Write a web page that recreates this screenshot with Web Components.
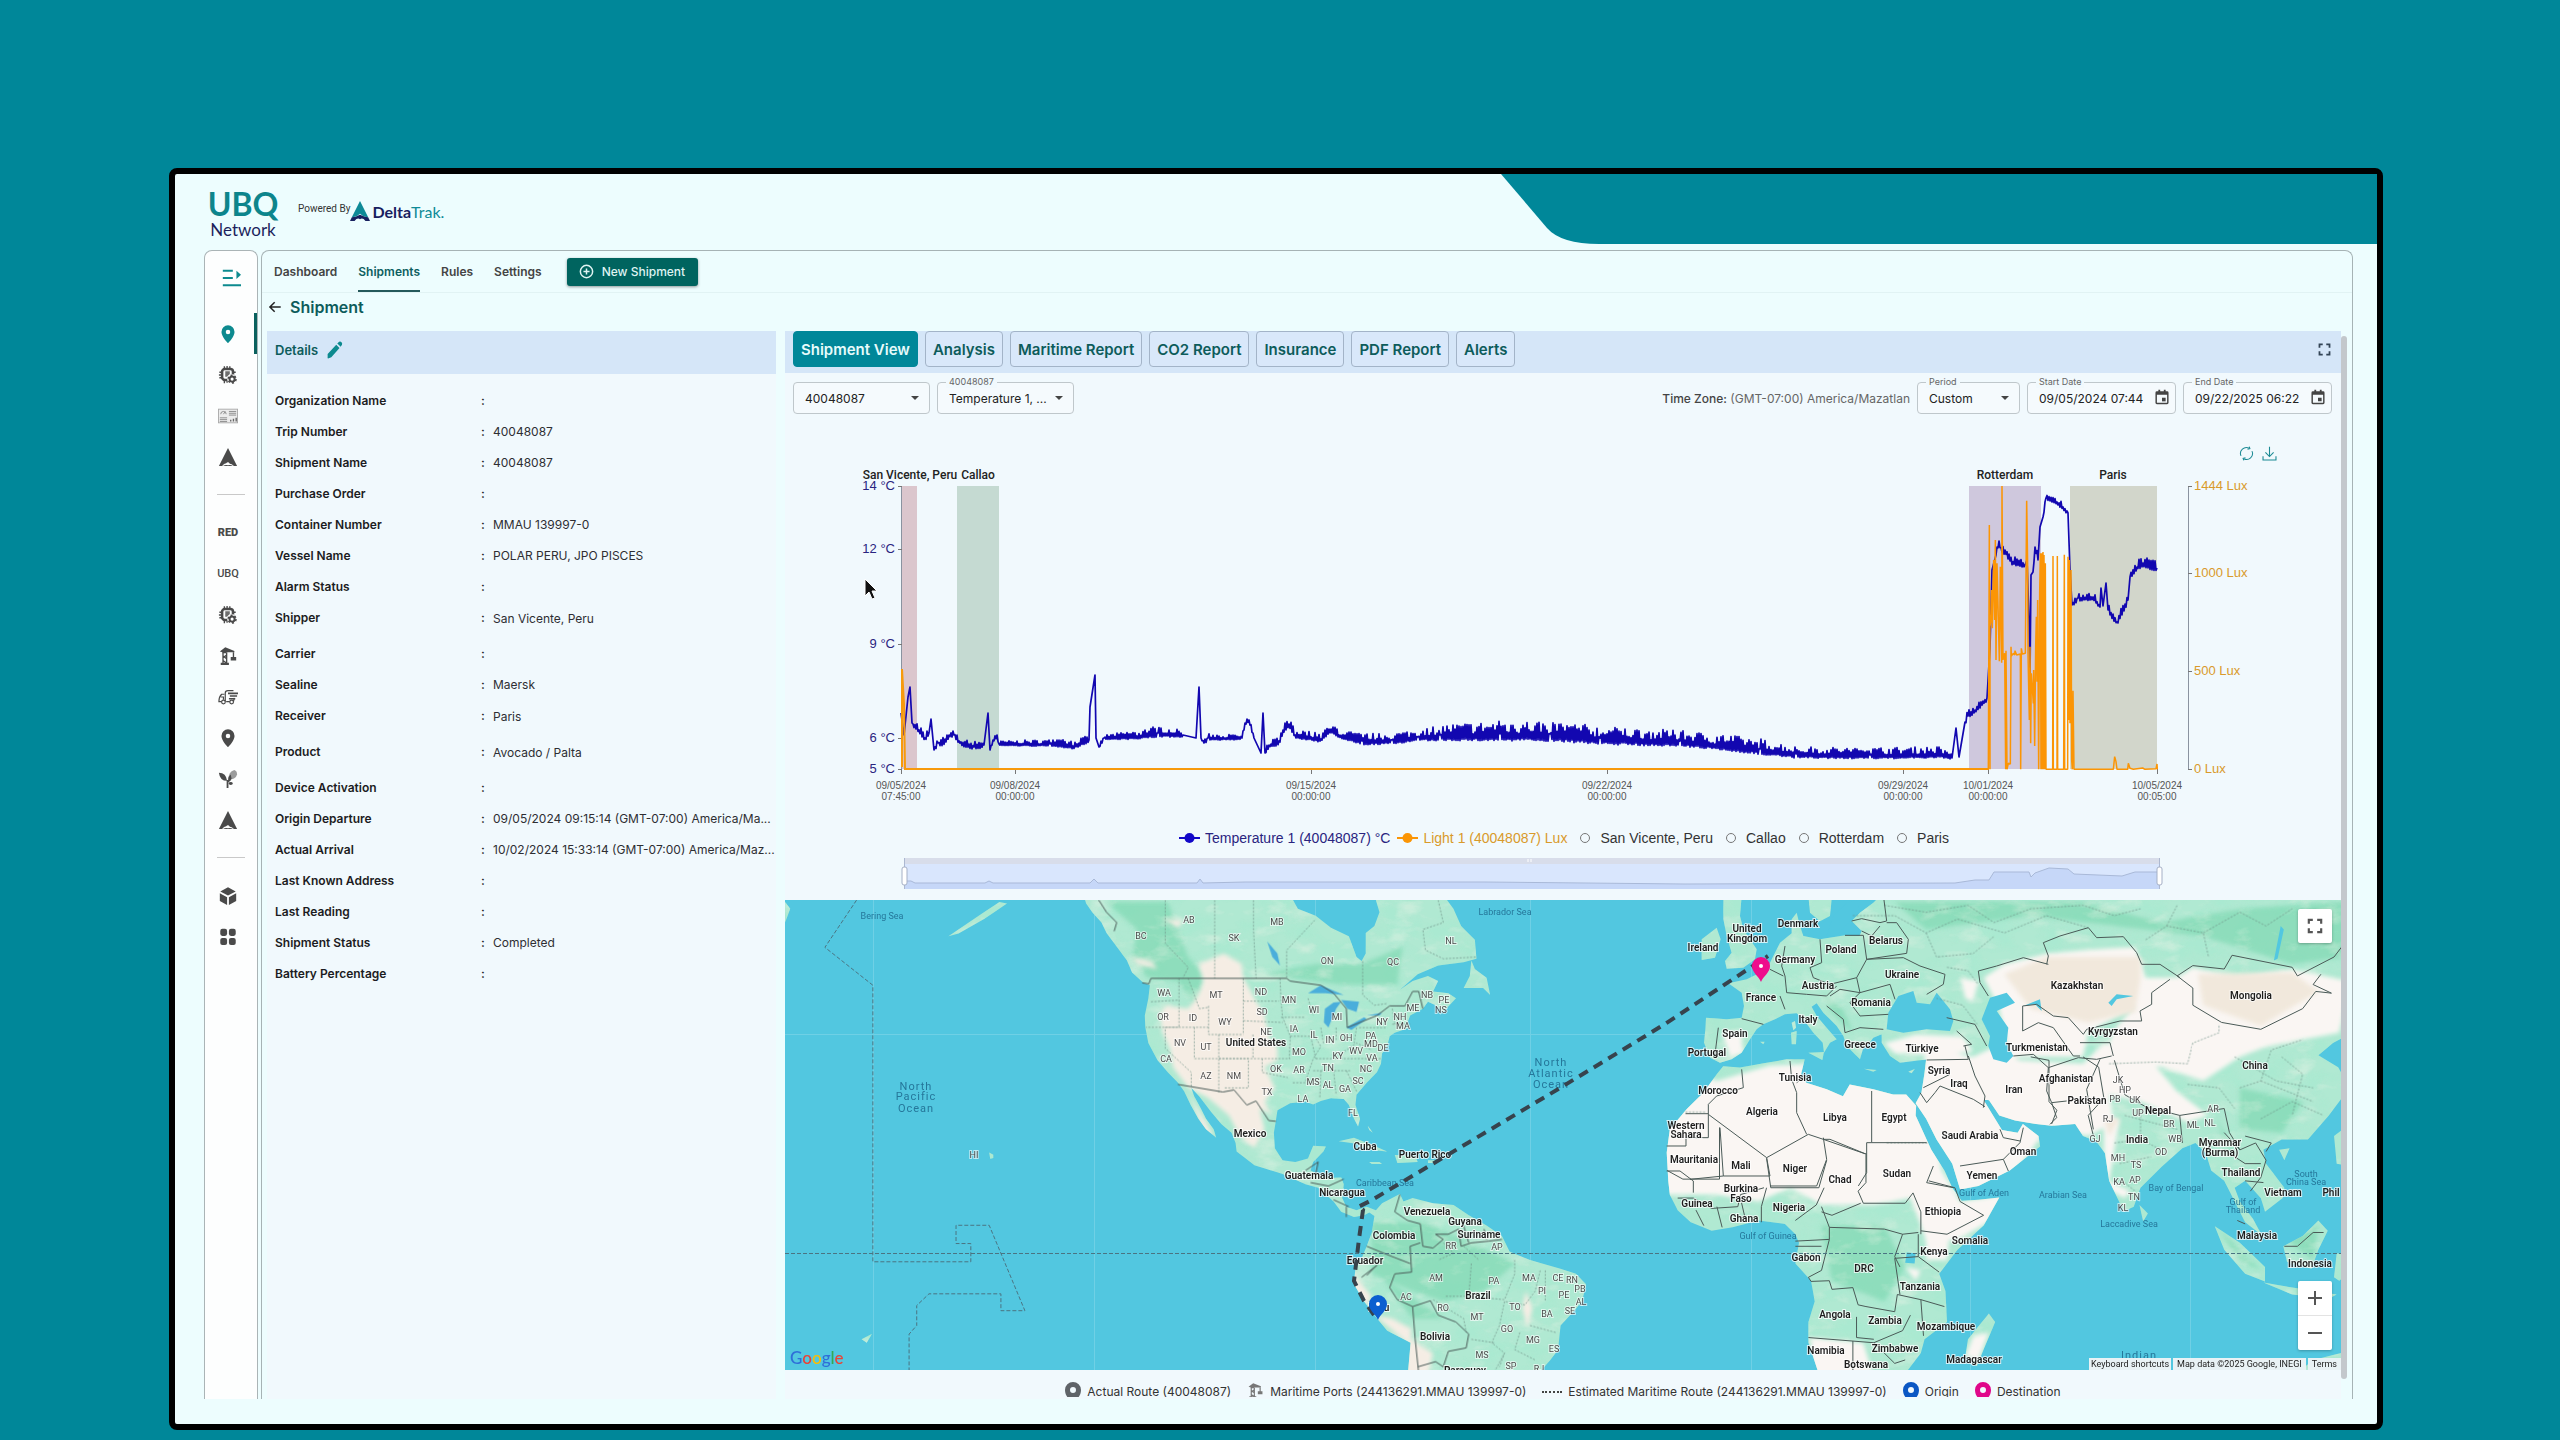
<!DOCTYPE html>
<html lang="en">
<head>
<meta charset="utf-8">
<title>UBQ Network - Shipment</title>
<style>
html,body{margin:0;height:100%}
body{background:#008799;font-family:Inter,"Liberation Sans",sans-serif;font-size:12px;color:#222}
</style>
</head>
<body>
<ubq-app></ubq-app>
<script>
const def=(name,html,setup)=>customElements.define(name,class extends HTMLElement{
  connectedCallback(){
    if(this.shadowRoot)return;
    const r=this.attachShadow({mode:'open'});
    const t=document.createElement('template');
    t.innerHTML=typeof html==='function'?html(this):html;
    r.append(t.content.cloneNode(true));
    if(setup)setup.call(this,r);
  }
});

/* ---------- icons ---------- */
const delta='<path d="M11 1 21 21H17.500Q15 18.500 13 18.500 11 15.500 9 18 6.500 18 4.500 21H1Z"/><path d="M5.500 21Q8 19 11 20 14 19 16.500 21Z"/>';
const ICONS={
 toggle:'<g fill="none" stroke="#0d8a8f" stroke-width="2"><path d="M2 3h11M2 11h11M2 19h20"/></g><path fill="#0d8a8f" d="M17 3v9l5-4.500z"/>',
 pin:'<path fill-rule="evenodd" d="M11 1.500a7.200 7.200 0 0 0-7.200 7.200C3.800 14 11 21 11 21s7.200-7 7.200-12.300A7.200 7.200 0 0 0 11 1.500Zm0 4.700a2.500 2.500 0 1 1 0 5 2.500 2.500 0 0 1 0-5Z"/>',
 chip:'<g fill="none" stroke="currentColor"><rect x="4.500" y="4.500" width="12" height="12" rx="3" stroke-width="2.800"/><path stroke-width="1.500" d="M7 4V1.500M10 4V1M13 4V1.500M7 17v3M10 17v2.500M4 8H1.500M4 11H1M4 14H1.500M17 8h2.500"/></g><path d="M8 7h5v3l-3 3H8z" opacity=".8"/><circle cx="15.500" cy="15.500" r="5.400" fill="#fff"/><circle cx="15.500" cy="15.500" r="2.800" fill="none" stroke="currentColor" stroke-width="2.200"/><circle cx="15.500" cy="15.500" r="4.300" fill="none" stroke="currentColor" stroke-width="1.700" stroke-dasharray="2.200 2.300"/>',
 board:'<rect x=".5" y="3.500" width="21" height="15" fill="#ececec" stroke="#a9a9a9"/><g stroke="#888" fill="none"><path d="M3 9a3 3 0 0 1 6 0M6 9l2-3M12 6h8M12 8h8M12 10h8M2 13h8M2 15h8M2 17h8"/><path stroke="#666" stroke-width="1.500" d="M14 17v-2M17 17v-3M20 17v-4"/></g>',
 delta,
 crane:'<path d="M2 6 8 1.500 18 5.500V7H9v1H5V7Z"/><path fill="none" stroke="currentColor" stroke-width="1.500" d="M5.500 7v13M9.500 7v13M5.500 11l4 3M5.500 16l4 3M9.500 10l-4 3M17 7v6"/><path d="M3 18.500h9v2.500H3zM14 12h6v4h-6z"/>',
 truck:'<g fill="none" stroke="currentColor" stroke-width="1.300"><path d="M8 16V6.500Q8 4 11 4h6M7 8H4Q1 11 1 16h3M9 16h4M17 16l1-4"/><path d="M11 7h11M13 10h8M12 13h7" stroke-width="1.700"/><circle cx="6" cy="16.500" r="2"/><circle cx="15" cy="16.500" r="2"/><path d="M3 11h3v3"/></g>',
 plant:'<path d="M1 4q8 0 9 9Q2 13 1 4Z"/><path d="M12 11q-1-8 6-10 3 1 3 5-2 6-9 5Z" opacity=".55"/><path d="M11 12q0-4 3-6l1 5z"/><path fill="none" stroke="currentColor" stroke-width="2" d="M10.500 12v9M11 14l3-3"/><ellipse cx="14" cy="16" rx="2.200" ry="1.600"/>',
 cube:'<path d="M11 1.500 19.500 6 11 10.500 2.500 6ZM2 8l8 4.300V21L2 16.500ZM20 8l-8 4.300V21l8-4.500Z"/>',
 grid:'<rect x="2.500" y="2" width="7.500" height="7.800" rx="2.300"/><rect x="12" y="2" width="7.500" height="7.800" rx="2.300"/><rect x="2.500" y="12" width="7.500" height="7.800" rx="2.300"/><rect x="12" y="12" width="7.500" height="7.800" rx="2.300"/>',
 back:'<path fill="none" stroke="#222" stroke-width="2.400" d="M20 11H3M10.500 3.500 3 11l7.500 7.500"/>',
 pencil:'<path d="M2 16 12.500 4.500l4 4L6.500 20 2.500 21.500Q1.500 21 2 20ZM13.800 3 16 1q1.500-.8 3 .5 1.300 1.500.5 3L18 7Z"/>',
 plus:'<g fill="none" stroke="currentColor" stroke-width="2.200"><circle cx="11" cy="11" r="9"/><path d="M11 6.500v9M6.500 11h9"/></g>',
 cal:'<path fill-rule="evenodd" d="M4 3h2V1h2.500v2h5V1H16v2h2q2 0 2 2v14q0 2-2 2H4q-2 0-2-2V5q0-2 2-2Zm0 5v11h14V8Z"/><path d="M11 12h5v5h-5z"/>',
 full:'<path fill="none" stroke="currentColor" stroke-width="3" d="M2.500 8V2.500H8M14 2.500h5.500V8M19.500 14v5.500H14M8 19.500H2.500V14"/>',
 refresh:'<g fill="none" stroke="currentColor" stroke-width="1.500"><path d="M3 14.500A8.600 8.600 0 0 1 15 3.400M19 7.500A8.600 8.600 0 0 1 7 18.600"/><path d="M12.500 4.800 16 4 15 .8M9.500 17.200 6 18l1 3.200"/></g>',
 down:'<path fill="none" stroke="currentColor" stroke-width="1.600" d="M11 1v14M5 9.500l6 6 6-6M1.500 15v5.500h19V15"/>'
};
def('ui-icon',h=>`<style>:host{display:inline-flex;width:var(--s,22px);height:var(--s,22px);flex:none}svg{width:100%;height:100%}</style>
<svg viewBox="0 0 22 22" fill="currentColor" aria-hidden="true">${ICONS[h.getAttribute('name')]}</svg>`);

/* ---------- header ---------- */
def('ubq-header',`<style>
:host{display:flex;height:76px;flex:none}
.logo{display:flex;flex-direction:column;align-items:center;width:70px;margin:13px 0 0 33px;font-family:Lato,sans-serif}
.logo b{font-size:32px;line-height:33px;font-weight:700;color:#0d858c}
.logo span{font-size:17px;line-height:20px;color:#1c1f5c}
.by{display:flex;align-items:center;height:24px;margin:22px 0 0 20px;font:10px Roboto,sans-serif;color:#333}
.by svg{width:20px;height:20px;margin-top:6px}
.dt{font:700 16px/20px Lato,sans-serif;color:#17205f;margin:8px 0 0 2px}
.dt span{font-weight:400;color:#0e8a97}
.wave{margin-left:auto;width:876px;height:70px}
</style>
<div class="logo"><b>UBQ</b><span>Network</span></div>
<div class="by"><span>Powered By</span><svg viewBox="0 0 22 22"><path fill="#0e8a97" d="M11 0 20 18 15 17 11 14 7 17 2 18Z"/><path fill="#17205f" d="M0 22 2 18Q7 18 9 16L11 15 13 16Q16 18 20 18L22 22H17Q14 18 11 20 8 18 5 22Z"/></svg><div class="dt">Delta<span>Trak.</span></div></div>
<svg class="wave" viewBox="0 0 876 70" preserveAspectRatio="none"><path fill="#008799" d="M0 0 46 54Q60 70 98 70H876V0Z"/></svg>`);

/* ---------- side rail ---------- */
def('side-rail',`<style>
:host{display:flex;flex-direction:column;align-items:stretch;box-sizing:border-box;width:54px;flex:none;background:#fdfefe;border:1px solid #aab4b6;border-bottom:0;border-radius:8px 8px 0 0;padding:6px 0 0;color:#4a4a4a}
button{all:unset;box-sizing:border-box;height:41px;display:flex;align-items:center;justify-content:center;padding-right:6px;font:700 12px Roboto,sans-serif;--s:20px}
button.top{margin-bottom:15px;padding:0}
button.on{color:#0d8a8f;box-shadow:inset -3px 0 #0a615e}
hr{border:0;height:1px;width:28px;background:#c9c9c9;margin:17px auto 17px 12px}
.u{font-size:11px;font-weight:500}.r{font-weight:900;font-size:11px}
</style><button class="top" aria-label="Expand"><ui-icon name="toggle"></ui-icon></button>
<button class="on" aria-label="Shipments"><ui-icon name="pin"></ui-icon></button>
<button aria-label="Devices"><ui-icon name="chip"></ui-icon></button>
<button aria-label="Dashboards"><ui-icon name="board"></ui-icon></button>
<button aria-label="DeltaTrak"><ui-icon name="delta"></ui-icon></button><hr>
<button class="r">RED</button><button class="u">UBQ</button>
<button aria-label="Chips"><ui-icon name="chip"></ui-icon></button>
<button aria-label="Ports"><ui-icon name="crane"></ui-icon></button>
<button aria-label="Carriers"><ui-icon name="truck"></ui-icon></button>
<button aria-label="Locations"><ui-icon name="pin"></ui-icon></button>
<button aria-label="Products"><ui-icon name="plant"></ui-icon></button>
<button aria-label="Delta"><ui-icon name="delta"></ui-icon></button><hr>
<button aria-label="Packages"><ui-icon name="cube"></ui-icon></button>
<button aria-label="Apps"><ui-icon name="grid"></ui-icon></button>`);

/* ---------- top navigation ---------- */
def('top-nav',`<style>
:host{display:block}
nav{display:flex;align-items:stretch;gap:21px;height:41px;padding-left:12px;border-bottom:1px solid #e1f3f4}
a{display:flex;align-items:center;font-weight:600;font-size:12px;color:#444;text-decoration:none;box-sizing:border-box;border:solid transparent;border-width:2px 0}
a.on{color:#0d5f61;border-bottom-color:#24595b}
button{align-self:center;display:flex;align-items:center;gap:8px;height:28px;margin-left:4px;padding:0 13px 0 12px;border:0;border-radius:3px;background:#00645f;color:#dff3f2;font:500 12px Inter,sans-serif;box-shadow:0 1px 3px #0006;--s:15px}
.title{display:flex;align-items:center;gap:8px;height:28px;padding-left:6px;--s:14px}
h1{margin:0;font-size:16px;font-weight:600;line-height:28px;color:#0d5c5b}
</style><nav><a href="#">Dashboard</a><a href="#" class="on">Shipments</a><a href="#">Rules</a><a href="#">Settings</a>
<button><ui-icon name="plus"></ui-icon>New Shipment</button></nav>
<div class="title"><ui-icon name="back"></ui-icon><h1>Shipment</h1></div>`);

/* ---------- details ---------- */
def('detail-row',`<style>
:host{display:grid;grid-template-columns:206px 12px 1fr;height:31px;line-height:31px;font-size:12px;color:#2e2e33}
:host([tall]){height:36px}
b{font-weight:600;color:#1c1c22}
:host([tall]) .v{line-height:34px}
.v{white-space:nowrap}
</style><b><slot name="label"></slot></b><b>:</b><span class="v"><slot></slot></span>`);
const rows=[['Organization Name',''],['Trip Number','40048087'],['Shipment Name','40048087'],['Purchase Order',''],['Container Number','MMAU 139997-0'],['Vessel Name','POLAR PERU, JPO PISCES'],['Alarm Status',''],['Shipper','San Vicente, Peru',1],['Carrier',''],['Sealine','Maersk'],['Receiver','Paris',1],['Product','Avocado / Palta',1],['Device Activation',''],['Origin Departure','09/05/2024 09:15:14 (GMT-07:00) America/Ma...'],['Actual Arrival','10/02/2024 15:33:14 (GMT-07:00) America/Maz...'],['Last Known Address',''],['Last Reading',''],['Shipment Status','Completed'],['Battery Percentage','']];
def('shipment-details',()=>`<style>
:host{display:block;width:509px;flex:none;background:#f1f9fd}
header{display:flex;align-items:center;gap:8px;height:43px;box-sizing:border-box;padding:0 8px 6px;background:#d5e6f8;font-weight:600;font-size:13px;color:#0d5c5b;--s:18px}
ui-icon{color:#0d8a8f}
.rows{padding:11px 4px 0 8px}
</style><header><span>Details</span><ui-icon name="pencil"></ui-icon></header>
<div class="rows">${rows.map(r=>`<detail-row${r[2]?' tall':''}><span slot="label">${r[0]}</span>${r[1]}</detail-row>`).join('')}</div>`);

/* ---------- outlined field ---------- */
def('out-field',h=>{const v=h.getAttribute('value'),l=h.getAttribute('label')||'',d=h.getAttribute('type')==='date';
return `<style>
:host{display:block;position:relative;height:32px;flex:none}
select,input{appearance:none;box-sizing:border-box;width:100%;height:32px;margin:0;padding:0 26px 0 11px;border:1px solid #bfc7cb;border-radius:4px;background:#f5fafd;font:12px Inter,sans-serif;color:#222}
label{position:absolute;left:9px;top:-6px;padding:0 3px;background:#f1f9fd;font-size:9px;line-height:12px;color:#666}
.t{position:absolute;right:11px;top:14px;border:4px solid transparent;border-top-color:#444;border-bottom:0}
ui-icon{position:absolute;right:6px;top:7px;--s:16px;color:#444}
</style>${l?`<label for="f">${l}</label>`:''}${d?`<input id="f" value="${v}"><ui-icon name="cal"></ui-icon>`:`<select id="f" aria-label="${l||'Device'}"><option>${v}</option></select><i class="t"></i>`}`});

/* ---------- report tabs and filters ---------- */
def('report-bar',`<style>
:host{display:block}
.tabs{display:flex;align-items:flex-start;gap:7px;height:42px;padding:0 8px;background:#d5e6f8}
.tabs button{height:36px;padding:0 7px;border:1px solid #a3b4c8;border-radius:4px;background:#d9e8fa;color:#0d5c5b;font:600 15px Inter,sans-serif}
.tabs button.on{background:#008799;border-color:#008799;color:#e6fbfb}
.tabs .fs{all:unset;margin:12px 2px 0 auto;color:#345;line-height:0;--s:13px}
.f{display:flex;align-items:center;gap:7px;padding:9px 9px 0 8px}
.tz{margin-left:auto;color:#666}.tz b{font-weight:500;color:#444}
.w1{width:137px}.w2{width:103px}.w3{width:149px}
</style><div class="tabs"><button class="on">Shipment View</button><button>Analysis</button><button>Maritime Report</button><button>CO2 Report</button><button>Insurance</button><button>PDF Report</button><button>Alerts</button><button class="fs" aria-label="Full screen"><ui-icon name="full"></ui-icon></button></div>
<div class="f"><out-field class="w1" value="40048087"></out-field><out-field class="w1" label="40048087" value="Temperature 1, ..."></out-field>
<span class="tz"><b>Time Zone:</b> (GMT-07:00) America/Mazatlan</span>
<out-field class="w2" label="Period" value="Custom"></out-field><out-field class="w3" type="date" label="Start Date" value="09/05/2024 07:44"></out-field><out-field class="w3" type="date" label="End Date" value="09/22/2025 06:22"></out-field></div>`);

/* ---------- chart ---------- */
// Key readings: x, y and jitter amplitude in chart units; the readings between them are filled in.
const temp=[[901,713,0],[904,735,0],[908,697,0],[910,687,0],[912,723,3],[919,730,4],[925,738,4],[929,733,3],[931,719,0],[934,750,2],[938,743,4],[946,742,4],[949,735,2],[954,735,3],[960,743,3],[974,747,4],[984,745,3],[988,713,0],[990,750,2],[993,740,3],[997,735,4],[999,744,2],[1050,744,3],[1073,746,4],[1089,740,3],[1090,707,0],[1095,675,0],[1096,738,0],[1099,747,2],[1104,738,2],[1137,736,4],[1158,733,5],[1183,735,3],[1196,738,0],[1199,687,0],[1201,738,2],[1204,743,2],[1208,738,3],[1242,738,2],[1245,723,3],[1249,720,2],[1254,738,2],[1261,753,0],[1263,713,0],[1265,753,2],[1269,745,3],[1280,742,4],[1283,730,4],[1289,724,4],[1295,735,4],[1321,739,4],[1331,729,4],[1339,735,4],[1362,741,5],[1392,740,5],[1418,737,5],[1440,735,7],[1500,734,9],[1550,734,9],[1600,738,8],[1680,741,7],[1715,744,7],[1760,749,7],[1796,754,5],[1870,755,5],[1943,754,5],[1952,758,2],[1956,728,0],[1959,757,0],[1965,722,3],[1968,716,4],[1975,710,4],[1987,698,4],[1990,647,0],[1992,570,0],[1996,555,3],[1999,541,3],[2002,552,6],[2005,550,4],[2010,561,4],[2025,565,4],[2027,560,0],[2029,620,0],[2030,675,0],[2031,575,0],[2033,572,5],[2035,547,3],[2038,560,4],[2040,527,0],[2043,517,2],[2046,498,2],[2057,502,3],[2063,507,4],[2068,513,2],[2070,570,0],[2072,605,2],[2078,598,4],[2093,597,4],[2100,607,2],[2101,588,0],[2103,606,2],[2106,583,0],[2108,610,4],[2117,622,4],[2128,600,4],[2130,577,4],[2137,567,4],[2143,563,5],[2157,568,5]];
let seed=7;const rnd=()=>(seed=(seed*16807)%2147483647)/2147483647;
let tp='';
for(let i=0;i<temp.length-1;i++){const [a,b,n]=temp[i],[c,d,m]=temp[i+1];tp+=`${a-785} ${b-374} `;
  if(n&&m)for(let x=a+1;x<c;x++){const k=(x-a)/(c-a),q=(n+(m-n)*k);const j=x%2?-rnd()*q*1.5:q*.5+rnd()*q*.3;tp+=`${x-785} ${(b+(d-b)*k+j-374).toFixed(1)} `}}
tp+='1372 194';
const light='-3 928 265 928 268 195 270 928 270 500 273 480 275 390 277 505 279 390 281 300 284 480 286 240 288 600 291 310 298 604 301 320 305 608 306 78 309 600 311 585 314 580 317 928 318 572 321 928 325 910 331 912 333 560 334 588 340 580 344 585 345 572 350 585 361 582 362 928 364 565 367 582 376 580 380 122 383 320 384 580 388 780 390 560 392 850 394 640 400 730 401 630 404 858 407 560 409 470 411 665 413 420 416 928 419 400 421 280 423 928 425 280 427 928 429 276 431 928 432 285 434 928 436 310 438 928 458 928 459 288 460 928 471 928 472 288 473 928 491 928 493 284 494 928 503 928 504 290 506 780 508 300 510 790 513 330 515 900 517 928 519 692 522 928 640 928 644 890 648 905 651 928 683 928 685 910 690 925 700 928 728 924 735 928 768 926 771 912 772 928';
const band=(x,w,c)=>`<rect x="${x-785}" y="112" width="${w}" height="283" fill="${c}"/>`;
const xt=[[901,'09/05/2024','07:45:00'],[1015,'09/08/2024','00:00:00'],[1311,'09/15/2024','00:00:00'],[1607,'09/22/2024','00:00:00'],[1903,'09/29/2024','00:00:00'],[1988,'10/01/2024','00:00:00'],[2157,'10/05/2024','00:05:00']];
def('trip-chart',()=>`<style>
:host{display:block}
svg{display:block;width:100%;height:auto}
text{font-family:"Liberation Sans",sans-serif}
.tools{position:absolute;right:64px;top:32px;display:flex;gap:8px;--s:15px;color:#1b8a94}
.wrap{position:relative}
.wrap button{all:unset;line-height:0}
.lg{display:flex;justify-content:center;align-items:center;height:24px;padding-left:9px;font:14px/24px "Liberation Sans",sans-serif;color:#333}
.lg span{display:flex;align-items:center;margin-right:7px}
.lg .k{width:21px;height:12px;margin-right:5px}
.lg .o{box-sizing:border-box;width:10px;height:10px;border:1px solid #777;border-radius:50%;margin:0 10px 0 6px}
</style><div class="wrap"><div class="tools"><button aria-label="Refresh"><ui-icon name="refresh"></ui-icon></button><button aria-label="Download"><ui-icon name="down"></ui-icon></button></div>
<svg viewBox="0 40 1556 412">
${band(902,15,'#dbc6cd')}${band(957,42,'#c5dad2')}${band(1969,72,'#cfc8dd')}${band(2070,87,'#d2d6cb')}
<g font-size="12" fill="#222" text-anchor="middle" style="font-weight:500">${[[910,'San Vicente, Peru'],[978,'Callao'],[2005,'Rotterdam'],[2113,'Paris']].map(a=>`<text x="${a[0]-785}" y="105" style="font-family:Roboto">${a[1]}</text>`).join('')}</g>
<path d="M116.500 112V395M1403.500 112V395" stroke="#8a93a0"/>
<g stroke="#777">${[[112],[175],[270],[364],[395]].map(a=>`<path d="M113 ${a[0]}.5h4"/>`).join('')}${[112,199,297,395].map(a=>`<path d="M1403 ${a}.5h4"/>`).join('')}${xt.map(a=>`<path d="M${a[0]-785}.5 395v5"/>`).join('')}</g>
<g font-size="13" fill="#2a2480" text-anchor="end">${[[112,14],[175,12],[270,9],[364,6],[395,5]].map(a=>`<text x="110" y="${a[0]+4}">${a[1]} °C</text>`).join('')}</g>
<g font-size="13" fill="#d99a2b">${[[112,1444],[199,1000],[297,500],[395,0]].map(a=>`<text x="1409" y="${a[0]+4}">${a[1]} Lux</text>`).join('')}</g>
<g font-size="10" fill="#555" text-anchor="middle">${xt.map(a=>`<text x="${a[0]-785}" y="415">${a[1]}</text><text x="${a[0]-785}" y="426">${a[2]}</text>`).join('')}</g>
<polyline points="${tp}" fill="none" stroke="#1207b0" stroke-width="1.700" stroke-linejoin="round"/>
<path d="M117 393V295L119 330 120 395H1204" fill="none" stroke="#f79a0c" stroke-width="2"/>
<g transform="translate(1115 86) scale(.333333)"><polyline points="${light}" fill="none" stroke="#fb9505" stroke-width="4.500" stroke-linejoin="bevel"/></g>
</svg></div>
<div class="lg">
<span style="color:#2a2480"><svg class="k" viewBox="0 0 21 12"><path stroke="#1207c8" stroke-width="2" d="M0 6h21"/><circle cx="10.500" cy="6" r="5" fill="#1207c8"/></svg>Temperature 1 (40048087) °C</span>
<span style="color:#d99a2b"><svg class="k" viewBox="0 0 21 12"><path stroke="#fb9505" stroke-width="2" d="M0 6h21"/><circle cx="10.500" cy="6" r="5" fill="#fb9505"/></svg>Light 1 (40048087) Lux</span>
<span><i class="o"></i>San Vicente, Peru</span><span><i class="o"></i>Callao</span><span><i class="o"></i>Rotterdam</span><span><i class="o"></i>Paris</span></div>
<svg viewBox="0 476 1556 50"><g>
<rect x="119" y="484" width="1255" height="31" fill="#d9e6fd"/><rect x="119" y="484" width="1255" height="6" fill="#d8ddea"/><path d="M743 485v3M746 485v3" stroke="#fff"/>
<path d="M119 515V507L126 507 130 509 200 509 204 507 208 509 305 509 309 505 313 509 412 509 415 505 418 509 460 508 700 508 900 510 1170 509 1190 506 1204 506 1209 498 1244 498 1246 503 1250 499 1264 494 1283 495 1289 500 1337 502 1350 498 1374 498V515Z" fill="#c6d7f8"/>
<path d="M119 507L126 507 130 509 200 509 204 507 208 509 305 509 309 505 313 509 412 509 415 505 418 509 460 508 700 508 900 510 1170 509 1190 506 1204 506 1209 498 1244 498 1246 503 1250 499 1264 494 1283 495 1289 500 1337 502 1350 498 1374 498" fill="none" stroke="#a9b9d8"/>
<path d="M119.500 484v31M1374.500 484v31" stroke="#acb8d1"/>
<rect x="117" y="493" width="5" height="18" rx="2" fill="#fff" stroke="#a5b0c6"/><rect x="1372" y="493" width="5" height="18" rx="2" fill="#fff" stroke="#a5b0c6"/>
</g></svg>`);

/* ---------- map ---------- */
// Two digitised sheets: W covers the Americas, E covers Europe, Africa and Asia, N is a finer northern sheet.
const W='translate(-5 -5) scale(.5102 .3444)',E='translate(775 -5) scale(.523 .3444)',N='translate(875 -4) scale(.33333)';
const landW='M595 0 600 25 612 50 630 80 640 110 660 150 680 190 690 225 712 255 725 262 722 300 715 350 716 385 722 430 740 480 760 515 780 545 792 570 805 610 820 650 835 680 855 705 850 680 835 650 825 620 812 585 806 560 822 585 845 630 865 665 885 690 893 720 895 745 930 785 985 810 1030 840 1055 850 1070 870 1085 890 1100 920 1125 935 1145 930 1155 922 1165 932 1160 980 1150 1020 1140 1055 1128 1080 1125 1130 1145 1180 1165 1220 1190 1265 1236 1300 1230 1400H1480L1510 1350 1525 1320 1530 1250 1555 1210 1572 1180 1580 1130 1560 1100 1530 1085 1470 1060 1430 1035 1415 990 1385 960 1350 930 1320 900 1280 895 1240 880 1222 890 1215 868 1180 895 1168 915 1150 905 1130 915 1110 905 1102 880 1105 840 1100 820 1070 822 1040 800 1045 775 1065 745 1070 730 1045 728 1035 765 1010 775 985 770 970 735 968 690 972 655 975 625 1000 605 1030 600 1045 608 1060 598 1080 590 1105 592 1115 610 1125 650 1133 672 1137 650 1128 610 1130 580 1150 545 1170 515 1178 490 1180 460 1190 440 1195 410 1205 400 1235 385 1230 370 1235 350 1260 330 1270 310 1285 320 1300 340 1325 300 1310 285 1280 280 1290 250 1270 235 1240 250 1215 275 1250 230 1290 205 1340 195 1365 185 1362 130 1335 90 1320 40 1300 0H1165L1175 50 1165 90 1148 110 1148 170 1140 192 1130 180 1115 120 1080 95 1050 60 1015 40 1000 0ZM1355 190 1362 215 1385 240 1392 290 1378 270 1340 270 1352 235ZM1095 715 1125 705 1160 725 1190 745 1155 740 1130 722ZM1205 755 1245 757 1250 775 1210 778ZM1270 770h15v8h-15ZM1155 775l20 0 5 6-20 0ZM410 748l8 6 0 10-6 2ZM330 120 380 70 430 20 445 25 400 70 350 112ZM160 1290 180 1275 170 1300ZM10 20 20 40 10 80ZM1152 670 1162 690 1155 682Z';
const europe='M575 75 600 50 640 20 660 0 1600 0 1600 700 900 600 800 490 760 495 720 500 690 480 665 440 665 415 640 425 625 445 610 455 600 490 580 470 560 450 550 420 530 390 490 350 470 322 455 332 470 360 500 395 530 430 510 440 492 470 488 440 460 410 430 370 410 352 375 355 345 370 310 385 290 400 270 430 245 470 215 490 180 500 150 485 132 440 136 400 138 365 200 370 245 365 252 330 245 290 205 262 260 250 300 230 330 200 340 180 360 140 395 112 395 70 410 50 420 90 430 120 480 130 555 118 598 120 605 105ZM445 0 450 50 480 76 510 60 516 0ZM190 0 245 0 240 60 250 100 290 160 285 190 250 215 200 218 195 195 215 170 200 120 190 70ZM125 130 170 95 182 130 165 185 125 192ZM395 380l10-5 3 20-8 8ZM393 410 410 405 408 445 395 445ZM445 470 492 468 487 492ZM612 518 650 522 640 527ZM745 527 765 518 755 532ZM300 437l14 0-4 8Z';
const africa='M468 477 433 477 395 487 344 501 312 497 300 520 274 574 242 622 210 680 204 748 207 830 210 870 225 915 250 950 290 975 330 965 380 945 430 955 450 985 457 1010 450 1070 480 1120 487 1180 475 1240 475 1300 497 1400 655 1400 690 1330 697 1290 740 1240 737 1150 725 1100 760 1030 810 960 840 878 800 885 768 888 750 850 735 800 710 740 695 690 680 640 681 612 662 579 637 579 599 564 554 550 541 584 510 564 471 545 460 526Z';
const asia='M700 477 697 516 691 574 680 605 700 650 720 710 750 780 765 855 800 845 860 800 918 730 915 700 885 665 875 690 845 682 810 595 820 595 840 640 870 655 910 665 940 670 985 665 1000 700 1025 715 1042 750 1050 830 1078 918 1097 905 1110 850 1150 790 1190 735 1215 720 1235 750 1245 800 1270 830 1290 890 1310 950 1342 988 1325 940 1300 890 1290 850 1310 830 1340 880 1348 920 1382 880 1385 850 1350 780 1345 740 1380 710 1430 710 1470 640 1510 560 1488 500 1450 465 1478 430 1515 400V0L760 0 760 450ZM820 1215 832 1240 810 1320 797 1368 775 1340 780 1290ZM1252 962 1300 1010 1348 1080 1348 1122 1310 1100 1270 1030ZM1345 1125 1400 1140 1485 1160 1470 1172 1400 1160ZM1383 1020 1420 990 1450 945 1468 975 1450 1030 1437 1085 1390 1065ZM1108 900 1124 925 1115 948ZM1375 740 1395 735 1385 770ZM1515 660 1480 700 1485 780 1515 790ZM1515 1045 1485 1040 1480 1110 1490 1120 1515 1090ZM1520 1320 1440 1350 1400 1400H1520Z';
const seas='<g transform="'+N+'"><path d="M680 400 685 350 715 300 760 285 770 320 810 325 830 290 870 340 880 375 870 405 800 400 730 410Z"/><path d="M990 305 1040 290 1065 320 1010 345 1045 395 1040 440 1060 480 1040 500 1000 490 985 450 990 420 965 370Z"/><path d="M1345 320 1370 295 1420 300 1370 310 1355 330ZM1090 330 1140 310 1145 345 1125 325Z"/><path d="M560 20 590 12 600 45 575 70 530 118 500 118 520 60Z"/></g><g transform="'+E+'"><path d="M663 1038 680 1040 678 1070 660 1068ZM1365 190 1378 90 1384 100 1372 185Z"/></g>';
const lakes='M1035 285 1060 262 1105 290 1070 285ZM1068 330 1085 312 1100 310 1090 330 1075 385 1066 370ZM1100 305 1135 310 1130 340 1112 330ZM1110 385 1145 355 1150 360 1120 392ZM1150 350 1180 342 1175 350ZM955 135 975 170 980 205 965 180Z';
const pale={
W:'M820 200 870 170 905 200 908 240 930 300 950 350 960 420 975 440 975 480 950 500 970 560 950 600 965 640 940 620 950 680 930 735 900 700 880 640 840 590 800 560 770 500 765 450 750 400 745 350 755 320 800 330 820 290 830 250ZM1165 1220 1200 1230 1238 1260 1236 1290 1280 1330 1270 1400 1225 1400 1230 1300ZM1120 1080 1135 1120 1160 1165 1150 1195 1120 1140ZM750 70 790 75 780 95ZM1462 1150 1475 1200 1465 1260 1455 1200ZM800 570 850 700 830 690ZM690 180 730 195 740 215 700 200Z',
E:'M200 480 300 540 400 495 480 490 700 560 730 800 765 890 850 870 820 950 760 1000 700 1010 695 980 670 880 600 900 500 900 440 850 380 890 300 870 195 870ZM690 540 700 440 790 470 830 440 880 480 1000 490 1040 430 1130 480 1180 570 1240 640 1200 660 1110 600 1050 580 1060 660 1010 700 940 680 920 700 860 830 760 870 680 600ZM620 430 680 405 770 410 790 455 720 465 640 460ZM810 240 850 200 930 170 1000 160 1100 150 1120 240 1180 240 1210 210 1290 240 1400 215 1510 250 1490 400 1420 420 1350 440 1300 470 1230 540 1150 500 1040 470 1060 390 1100 320 1010 400 1000 470 860 470 840 330ZM700 970 745 980 740 1060 700 1060ZM480 1285 580 1300 600 1400 480 1400ZM820 1270 800 1350 775 1340 790 1280ZM660 1080 690 1090 680 1120ZM1040 650 1070 650 1060 740 1050 830 1090 860 1080 880 1040 850ZM310 400 345 395 350 460 325 470ZM765 240 800 250 790 310 775 300Z'};
const dark={W:'M690 180 700 100 640 20 760 20 800 180 830 230 820 330 780 250 720 240ZM950 230 1050 200 1140 200 1220 150 1210 260 1100 260ZM1160 950 1260 950 1340 1000 1440 1070 1380 1150 1300 1180 1240 1150 1160 1100ZM1180 1110 1300 1230 1240 1230Z',E:'M640 20 1000 20 1150 80 1300 40 1500 20 1500 180 1400 200 1230 120 900 60 700 100ZM500 960 620 960 660 1080 620 1180 520 1120ZM1300 560 1420 600 1380 690 1300 680ZM1255 640 1290 760 1270 720ZM500 280 540 330 560 400 520 340ZM1390 1000 1450 960 1440 1060ZM1260 970 1340 1090 1300 1060ZM700 880 740 900 720 950Z'};
const bordW='M625 15 640 50 660 80 655 105M710 255 723 258 727 242H993L1000 250 1060 262 1085 285 1110 330 1112 385 1170 350 1195 322 1225 322 1240 280 1252 280 1260 330M780 550 868 572 890 566 915 610 933 598 958 655 972 657M1030 800 1055 775 1050 810M1040 835 1075 845 1105 825M1085 885 1115 905M1110 905v30M1215 870 1205 920 1230 945 1255 955 1260 1020 1280 1025 1300 1000 1285 985 1310 985 1330 970M1330 970 1335 1020 1355 1010 1390 1005 1415 1000M1340 960 1350 1010M1380 970 1385 1000M1255 1010 1235 1020 1238 1095 1205 1100 1195 1140 1210 1175 1240 1195 1275 1178 1290 1220 1325 1240 1350 1275 1345 1315 1310 1325 1300 1370 1285 1355 1250 1370M1240 1195 1245 1290 1252 1390M1150 1020 1200 1050 1235 1070M1150 1105 1170 1075 1140 1110';
const stateW='M755 15V140L800 210 790 240M852 15V242M928 15V100L933 242M993 240V160L1050 70M1142 192V290L1165 320 1190 315M1290 15 1300 80 1260 100 1265 160 1300 185 1365 180M727 310 782 305V384H717M782 242V305M800 242 822 330 840 326M840 322V405H908M840 384H755V445L806 515V560M812 384V475H1000M860 405V575M908 242V405M860 475H918V560H870M927 405V475M945 475V515L995 530M908 308H978M908 365 985 370M980 242 982 310 985 355 1000 410 998 475M982 355H1030M1000 410H1040L1050 475M1035 300 1045 350M1040 390 1060 440 1045 475 1030 540M1060 385 1065 430M1090 385V420M1130 385 1125 430M1135 385H1190M1050 475H1180M1045 510H1120M1060 510 1058 590M1085 510 1090 580M1110 510 1130 570M1005 545H1030M1100 460 1130 430 1160 450M1200 375H1235M1200 330 1205 375M1300 1010 1320 1040 1290 1060M1340 1020 1370 1060M1355 1070 1350 1165 1420 1175 1440 1100 1440 1060M1305 1165H1350M1280 1175 1340 1230 1345 1270M1490 1090 1480 1150 1460 1190 1420 1180M1500 1090V1180M1420 1180 1410 1250 1395 1300 1420 1330 1410 1370M1470 1250 1520 1270M1450 1270 1440 1320 1480 1350M1355 1290 1400 1300M1400 1385 1420 1330';
const bordN='M575 75 605 68 660 80 680 75 672 12M605 105 635 120 660 90M480 130 485 200 450 215 460 245 510 265 590 245 620 190 740 172 745 130 710 80 680 80M555 118 610 118 620 190M375 150 365 210 375 240 380 290M370 240 330 220M360 300 375 340M380 290 440 295 500 300 530 270M245 368 310 385M175 395 165 475M590 245 600 290 690 265 705 310M620 190 730 185 780 210 855 235 850 265 800 295M600 290 570 320 600 360 685 355M500 330 550 370 555 410 600 395 670 400M510 300 540 280 600 290M1160 205 1165 180 1150 140 1200 120 1285 95 1310 125 1390 122 1430 170 1445 205 1500 205 1560 245M1165 205 1090 185 1010 210 955 225 960 260 985 300M1530 250 1475 290 1475 325 1440 345 1445 375 1380 375 1280 400 1270 415 1225 365 1180 360 1130 325 1088 330V405M1088 405 1135 380 1180 395 1240 480 1260 480M1060 480 1120 475 1165 515 1255 485 1310 490 1355 480M1165 515 1160 585 1175 620 1220 615M1175 620 1190 665 1170 685M1280 580 1320 490M1260 440 1350 440 1360 480M860 365 945 385 980 450M890 405 935 445 910 450M915 450 925 490 800 492M925 480 945 540 975 600 970 635M870 535 790 575M780 590 800 620 825 590 840 570 940 610 975 632M245 520 250 575 170 600 145 625V655L320 785 445 715 490 730 620 775V740H635V585M410 560 435 540M390 495 395 550 410 590 410 650 440 715M490 730H510L620 775M635 740H800M1090 695 1080 740 1030 790 900 810M1030 790 1045 825M1020 700 1030 725 1080 735M320 785 330 840 190 840 180 695M190 840 90 850M20 750H78V725H145V655M20 825 60 825 100 855 100 890M490 725 500 790 470 870 330 870M620 775V830L595 870M820 810 800 860 880 875M1280 580 1290 640 1300 700';
const bordE='M205 800 235 825H305V675M283 635H240M395 765 403 850 495 850 510 770M585 755V835L570 860 580 895 660 895 675 865M705 830 755 850 765 890 810 930M690 975 740 985 810 930M675 865 690 920 690 985M395 850 385 905V950M345 880 355 945M300 905 310 965M260 915 275 960M225 880 255 880 290 910 340 905 345 870 390 850M505 850 490 900 450 945M500 905 515 965 515 1000 450 1005M515 1000 500 1090 475 1110 480 1122 515 1120 520 1145 560 1140 570 1190 585 1195 640 1210 645 1160 690 1175 735 1195M515 965 620 970 655 985 685 980M655 985 640 1050 650 1080M685 1050 725 1095M685 985 685 1050 640 1055 650 1160M450 1020H500M575 895 520 930 500 920M567 1225V1285L600 1290M475 1285 600 1300 655 1265 670 1220M560 1295V1380M600 1300 640 1360 660 1350M690 1175 695 1280M900 470 935 480 935 600 950 625 940 665M1180 235 1210 205 1270 215 1285 175 1400 210 1410 235 1480 180 1495 150M1180 235 1210 270 1210 320 1265 370 1340 390 1420 330 1445 280 1475 285 1440 260 1455 230M1060 480 1080 580 1120 615 1185 640 1270 620 1280 690 1300 740M1000 470 1030 500 1040 590 1010 640 1020 700M1185 640 1190 720M1270 690 1300 740 1330 720 1350 770 1340 820 1320 860M1310 700 1360 720 1350 745M1270 740 1310 780 1340 780M1310 830 1345 835M1385 1020 1410 1020 1440 980 1460 980M1295 945 1310 955';
const stateE='M1050 490 1140 485 1200 490 1210 430 1260 400 1260 375M1200 550 1260 560 1290 620M1300 560 1340 540 1360 450 1420 420M1290 470 1370 540 1440 560M1340 650 1400 600 1460 640M1080 640 1130 660 1180 680M1060 720 1110 710 1150 740M1070 780 1130 760M1075 830 1100 860M1110 620 1110 700M560 60 640 60 700 110 760 70 850 110 930 60 1010 95M700 110 720 180 790 170 830 120M620 30 700 50 780 30 830 80 900 40 1000 30 1060 60 1110 40M1120 130 1160 90 1230 110 1240 180M1160 90 1180 30M1230 110 1300 50 1350 90 1400 40M740 210 780 220 800 260M720 300 770 320 800 380M240 630h40M625 720h80M1380 470 1420 520 1400 640M1340 540 1440 600';
const T=(list,fn)=>list.trim().split(';').map(s=>{const [t,x,y]=s.trim().split('|');const p=fn(+x,+y);return `<text x="${Math.round(p[0])}" y="${Math.round(p[1])}">${t}</text>`}).join('');
const fW=(x,y)=>[-5+x*.5102,-1+y*.3444],fE=(x,y)=>[775+x*.523,-1+y*.3444];
const cW='United States|932|428;Mexico|922|692;Cuba|1147|729;Puerto Rico|1265|752;Guatemala|1037|813;Nicaragua|1102|863;Venezuela|1268|918;Guyana|1343|948;Suriname|1370|983;Colombia|1203|986;Ecuador|1147|1060;Brazil|1369|1162;Peru|1174|1196;Bolivia|1283|1281;Paraguay|1343|1378';
const cE='Denmark|456|81;United|357|95;Kingdom|357|125;Ireland|273|151;Poland|537|157;Belarus|624|131;Germany|450|187;Ukraine|654|229;Austria|494|262;France|385|295;Romania|594|311;Italy|475|361;Spain|334|401;Portugal|282|457;Greece|573|433;Türkiye|693|443;Kazakhstan|989|261;Mongolia|1321|290;Kyrgyzstan|1057|396;Turkmenistan|912|441;China|1328|494;Syria|724|507;Iraq|763|546;Iran|868|562;Afghanistan|968|532;Pakistan|1008|596;Nepal|1144|625;Tunisia|450|528;Morocco|303|565;Algeria|387|627;Libya|525|644;Egypt|638|644;Saudi Arabia|784|697;Oman|885|744;Yemen|806|814;India|1103|708;Myanmar|1261|718;(Burma)|1261|746;Thailand|1302|805;Vietnam|1382|862;Phil|1475|862;Malaysia|1332|987;Indonesia|1434|1069;Western|240|667;Sahara|240|695;Mauritania|257|768;Mali|346|785;Niger|449|792;Chad|536|826;Sudan|645|808;Burkina|346|851;Faso|346|881;Guinea|261|893;Ghana|351|937;Nigeria|437|906;Ethiopia|732|918;Somalia|783|1001;Kenya|716|1034;Gabon|470|1051;DRC|582|1082;Tanzania|689|1134;Angola|526|1217;Zambia|621|1234;Mozambique|738|1250;Namibia|509|1320;Zimbabwe|641|1316;Botswana|585|1363;Madagascar|791|1347';
const sW='AB|802|69;MB|974|76;BC|708|116;SK|890|121;ON|1073|188;QC|1202|192;NL|1316|132;WA|753|281;MT|855|287;ND|943|278;MN|997|302;OR|750|350;ID|810|355;WY|873|366;SD|944|336;WI|1046|332;MI|1092|350;IA|1008|385;NE|952|394;IL|1046|404;IN|1078|418;OH|1110|412;PA|1159|406;NY|1180|367;NH|1216|350;ME|1241|326;NB|1269|287;PE|1302|302;NS|1295|332;MA|1221|378;MD|1158|429;DE|1181|440;WV|1128|450;VA|1161|470;KY|1094|464;MO|1018|454;NV|784|427;UT|834|439;CA|756|472;AZ|835|523;NM|889|523;OK|973|502;AR|1018|505;TN|1074|499;NC|1148|501;SC|1133|536;GA|1108|561;AL|1074|549;MS|1045|540;TX|955|569;LA|1026|589;FL|1124|630;HI|380|753;RR|1316|1017;AP|1405|1018;AM|1285|1110;PA|1400|1118;MA|1468|1110;CE|1524|1108;RN|1552|1114;PI|1494|1147;PE|1537|1158;PB|1568|1140;AL|1570|1180;SE|1548|1205;AC|1226|1165;RO|1300|1196;TO|1440|1193;BA|1504|1214;MT|1367|1222;GO|1425|1258;MG|1475|1290;ES|1518|1316;MS|1376|1334;SP|1433|1364;RJ|1488|1374';
const sE='JK|1067|534;HP|1080|562;PB|1062|590;UK|1099|593;UP|1105|630;RJ|1048|647;AR|1248|619;BR|1165|663;ML|1210|664;NL|1243|658;GJ|1022|705;WB|1175|706;OD|1149|744;MH|1067|760;TS|1101|782;KA|1068|830;AP|1099|825;TN|1097|875;KL|1077|907';
const wW='Bering Sea|199|58;Labrador Sea|1421|46;Caribbean Sea|1185|833';
const wE='Gulf of Aden|810|862;Arabian Sea|962|867;Bay of Bengal|1178|848;Laccadive Sea|1088|952;Gulf of Guinea|397|987;Gulf of|1306|889;Thailand|1306|913;South|1427|806;China Sea|1427|830';
const oW='North|266|554;Pacific|266|585;Ocean|266|618;North|1512|485;Atlantic|1512|517;Ocean|1512|549';
const pinPath='M0 0C-2-6-9-9-9-16a9 9 0 0 1 18 0C9-9 2-6 0 0Z';
def('route-map',()=>`<style>
:host{display:block;position:relative}
svg.m{display:block;width:100%;height:auto;background:#52c7e0}
path{vector-effect:non-scaling-stroke}
text{font-family:Roboto,sans-serif;text-anchor:middle}
.c{font-size:10px;font-weight:600;fill:#1d1d1d;stroke:#fff;stroke-opacity:.75;stroke-width:2px;paint-order:stroke}
.s{font-size:9px;fill:#4c4c4c;stroke:#fff;stroke-opacity:.6;stroke-width:2px;paint-order:stroke}
.w{font-size:9px;fill:#25779a}
.o{font-size:11px;fill:#25779a;letter-spacing:1px}
.b{position:absolute;right:9px;width:34px;background:#fff;border-radius:2px;box-shadow:0 1px 3px #0004}
.b.t{top:9px}.b.z{bottom:20px}
button{all:unset;display:flex;align-items:center;justify-content:center;width:34px;height:34px;color:#555;--s:16px}
.cr{position:absolute;right:0;bottom:0;display:flex;gap:2px;font:9px/12px Roboto,sans-serif;color:#222}
.cr *{background:#e9f2f5;padding:0 4px;color:#222;text-decoration:none}
.cr button{all:unset;background:#e9f2f5;padding:0 2px}
.z button+button{border-top:1px solid #e3e3e3}
</style><svg class="m" viewBox="0 0 1556 470" role="img" aria-label="Route map">
<defs><filter id="soft" x="-5%" y="-5%" width="110%" height="110%"><feGaussianBlur stdDeviation="2"/></filter>
<filter id="relief" x="0" y="0" width="100%" height="100%"><feTurbulence type="fractalNoise" baseFrequency=".035 .05" numOctaves="4" seed="11"/><feColorMatrix values="0 0 0 0 .38  0 0 0 0 .82  0 0 0 0 .63  3.400 0 0 0 -1.500"/></filter>
<filter id="sand" x="0" y="0" width="100%" height="100%"><feTurbulence type="fractalNoise" baseFrequency=".03 .06" numOctaves="4" seed="4"/><feColorMatrix values="0 0 0 0 .93  0 0 0 0 .92  0 0 0 0 .84  3.400 0 0 0 -1.800"/></filter>
<clipPath id="land"><path transform="${W}" d="${landW}"/><path transform="${N}" d="${europe}"/><path transform="${E}" d="${africa}"/><path transform="${E}" d="${asia}"/></clipPath></defs>
<g fill="none" stroke="#6fd0e5"><path d="M88.500 0V470M309.500 0V470M530.500 0V470M745.500 0V470M966.500 0V470M1185.500 0V470M1405.500 0V470M0 134.500H1556"/></g>
<g clip-path="url(#land)"><rect width="1556" height="470" fill="#b0e9d2"/>
<rect width="1556" height="470" filter="url(#relief)" opacity=".55"/>
<g filter="url(#soft)" fill="#78d6ae" opacity=".6"><path transform="${W}" d="${dark.W}"/><path transform="${E}" d="${dark.E}"/></g>
<rect width="1556" height="470" filter="url(#sand)" opacity=".35"/>
<g filter="url(#soft)" fill="#faf6f3"><path transform="${W}" d="${pale.W}" fill="#f5ede4"/><path transform="${E}" d="${pale.E}"/></g>
<g filter="url(#soft)" fill="#f1e8dc"><path transform="${E}" d="M850 230 930 180 1110 180 1110 240 1100 340 1010 370 900 330ZM1220 230 1400 225 1450 280 1340 380 1230 320ZM1040 650 1070 650 1050 700Z"/></g></g>
<g fill="#52c7e0">${seas}</g>
<g fill="#4aaedb" transform="${W}"><path d="${lakes}"/></g>
<g fill="none" stroke="#6d8f85" stroke-dasharray="2 1.500" stroke-width=".8" opacity=".85"><path transform="${W}" d="${stateW}"/><path transform="${E}" d="${stateE}"/></g>
<g fill="none" stroke="#4a5a57" stroke-width="1" stroke-linejoin="round"><path transform="${W}" d="${bordW}"/><path transform="${N}" d="${bordN}"/><path transform="${E}" d="${bordE}"/></g>
<g fill="none" stroke="#4b7482" stroke-dasharray="4 2"><path d="M0 353.500H1556"/><path transform="${W}" d="M150 15 88 152 182 262V1065H374V1012H345V959H410L480 1207H433V1158H292L268 1192V1250L253 1275V1385"/></g>
<g class="w">${T(wW,fW)}${T(wE,fE)}</g><g class="o">${T(oW,fW)}<text x="1354" y="459">Indian</text></g>
<g class="s">${T(sW,fW)}${T(sE,fE)}</g><g class="c">${T(cW,fW)}${T(cE,fE)}</g>
<path d="M589 415 579 401 569 381 574 339 578 310 573 307 587 300 775 188 880 124 983 56" fill="none" stroke="#37434d" stroke-width="4" stroke-dasharray="10 7"/>
<g transform="translate(593 420)"><path d="${pinPath}" fill="#0b5fd0"/><circle cy="-16" r="2" fill="#fff"/></g>
<g transform="translate(976 82)"><path d="${pinPath}" fill="#ee0d8c"/><circle cy="-16" r="2" fill="#fff"/></g>
<text x="5" y="464" style="font:500 17px Lato,sans-serif;text-anchor:start"><tspan fill="#2f6fd8">G</tspan><tspan fill="#ea4335">o</tspan><tspan fill="#fbbc05">o</tspan><tspan fill="#2f6fd8">g</tspan><tspan fill="#34a853">l</tspan><tspan fill="#ea4335">e</tspan></text>
</svg>
<div class="b t"><button aria-label="Full screen"><ui-icon name="full"></ui-icon></button></div>
<div class="b z"><button aria-label="Zoom in"><svg width="14" height="14"><path d="M7 0v14M0 7h14" stroke="#555" stroke-width="2"/></svg></button><button aria-label="Zoom out"><svg width="14" height="14"><path d="M0 7h14" stroke="#555" stroke-width="2"/></svg></button></div>
<div class="cr"><button>Keyboard shortcuts</button><span>Map data ©2025 Google, INEGI</span><a href="#">Terms</a></div>`);

/* ---------- map legend ---------- */
const mk=c=>`<svg width="16" height="17" viewBox="0 0 16 17"><path fill="${c}" fill-rule="evenodd" d="M8 0a8 8 0 0 0-8 8c0 4 2 7 4 9h8c2-2 4-5 4-9a8 8 0 0 0-8-8Zm0 5a3 3 0 1 1 0 6 3 3 0 0 1 0-6Z"/></svg>`;
def('map-legend',`<style>
:host{display:flex;justify-content:center;gap:16px;padding-top:10px;height:17px;line-height:24px;font-size:12px;color:#333;white-space:nowrap;overflow:hidden}
span{display:flex;height:24px;gap:6px;align-items:center}svg,ui-icon{margin-top:-4px}
.d{width:20px;border-top:2px dotted #444}
ui-icon{--s:17px;color:#777}
</style><span>${mk('#5f6368')}Actual Route (40048087)</span><span><ui-icon name="crane"></ui-icon>Maritime Ports (244136291.MMAU 139997-0)</span><span><i class="d"></i>Estimated Maritime Route (244136291.MMAU 139997-0)</span><span>${mk('#0b57c4')}Origin</span><span>${mk('#e0078a')}Destination</span>`);

/* ---------- application shell ---------- */
def('ubq-app',`<style>
:host{display:flex;box-sizing:border-box;height:100vh;padding:168px 177px 10px 169px}
.frame{position:relative;display:flex;flex-direction:column;flex:1;min-width:0;border:6px solid #000;border-radius:8px;background:#edfdfe}
.body{display:flex;gap:3px;flex:1;min-height:0;padding:0 24px 25px 29px}
main{flex:1;min-width:0;display:flex;flex-direction:column;border:1px solid #a6b3b5;border-bottom:0;border-radius:8px 8px 0 0;overflow:hidden}
.cols{display:flex;gap:9px;flex:1;min-height:0;margin-top:10px;padding-left:5px;overflow:hidden}
.view{flex:1;min-width:0;background:#f1f9fd}
.bar{width:6px;height:1043px;margin:5px 5px 0 -9px;border-radius:3px;background:#c3c8cc}
.cur{position:absolute;left:689px;top:404px;width:14px;height:23px}
</style><div class="frame"><ubq-header></ubq-header>
<div class="body"><side-rail></side-rail><main><top-nav></top-nav>
<div class="cols"><shipment-details></shipment-details><div class="view"><report-bar></report-bar><trip-chart></trip-chart><route-map></route-map><map-legend></map-legend></div><div class="bar"></div></div></main></div>
<svg class="cur" viewBox="0 0 14 23"><path d="M1 1v17l4-4 3 7 3-1-3-7h5Z" fill="#111" stroke="#fff"/></svg></div>`);
</script>
</body>
</html>
